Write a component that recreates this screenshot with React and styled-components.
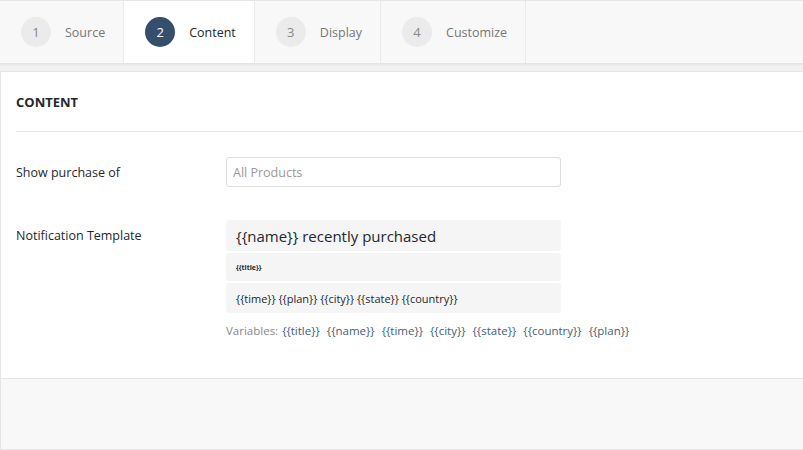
import React from "react";
import styled, { createGlobalStyle } from "styled-components";

const GlobalStyle = createGlobalStyle`
    html, body {
        margin: 0;
        padding: 0;
        background: #f1f1f1;
        font-family: "Open Sans", "Noto Sans", sans-serif;
    }
    * { box-sizing: border-box; }
`;

const steps = ["Source", "Content", "Display", "Customize"];
const variables = ["{{title}}", "{{name}}", "{{time}}", "{{city}}", "{{state}}", "{{country}}", "{{plan}}"];

const App = () => {
    return (
        <Page>
            <GlobalStyle />
            <TabBar>
                {steps.map((label, i) => (
                    <Tab key={label} active={i === 1}>
                        <StepNumber active={i === 1}>{i + 1}</StepNumber>
                        {label}
                    </Tab>
                ))}
            </TabBar>

            <Card>
                <CardHeader>CONTENT</CardHeader>
                <CardBody>
                    <FieldRow>
                        <Label>Show purchase of</Label>
                        <Input placeholder="All Products" />
                    </FieldRow>
                    <FieldRow top>
                        <Label top>Notification Template</Label>
                        <div>
                            <TemplateStack>
                                <TemplateLine size="big">{"{{name}} recently purchased"}</TemplateLine>
                                <TemplateLine size="tiny">{"{{title}}"}</TemplateLine>
                                <TemplateLine>{"{{time}} {{plan}} {{city}} {{state}} {{country}}"}</TemplateLine>
                            </TemplateStack>
                            <Variables>
                                Variables:
                                {variables.map((v) => (
                                    <Var key={v}>{v}</Var>
                                ))}
                            </Variables>
                        </div>
                    </FieldRow>
                </CardBody>
                <CardFooter />
            </Card>
        </Page>
    );
};

const Page = styled.div`
    width: 803px;
    height: 450px;
    overflow: hidden;
    background: #f1f1f1;
`;

const TabBar = styled.div`
    display: flex;
    height: 64px;
    background: #f8f8f8;
    border-top: 1px solid #e6e6e6;
    border-bottom: 1px solid #e4e4e4;
    box-shadow: 0 1px 2px rgba(0, 0, 0, 0.05);
    margin-bottom: 7px;
`;

const Tab = styled.div`
    display: flex;
    align-items: center;
    gap: 14px;
    padding: 0 18px 0 21px;
    height: 100%;
    border-right: 1px solid #eaeaea;
    background: ${(p) => (p.active ? "#ffffff" : "transparent")};
    color: ${(p) => (p.active ? "#23282d" : "#777")};
    font-size: 12.5px;
`;

const StepNumber = styled.span`
    width: 30px;
    height: 30px;
    border-radius: 50%;
    display: flex;
    align-items: center;
    justify-content: center;
    background: ${(p) => (p.active ? "#354e6b" : "#ebebeb")};
    color: ${(p) => (p.active ? "#ffffff" : "#888")};
    font-size: 13px;
`;

const Card = styled.div`
    background: #ffffff;
    border: 1px solid #e5e5e5;
    border-right: none;
`;

const CardHeader = styled.div`
    margin: 0 0 0 15px;
    height: 60px;
    display: flex;
    align-items: center;
    border-bottom: 1px solid #e8e8e8;
    font-size: 13px;
    font-weight: 700;
    color: #23282d;
`;

const CardBody = styled.div`
    padding: 25px 0 40px 15px;
    display: flex;
    flex-direction: column;
    gap: 33px;
`;

const FieldRow = styled.div`
    display: grid;
    grid-template-columns: 210px 335px;
    align-items: ${(p) => (p.top ? "start" : "center")};
`;

const Label = styled.div`
    font-size: 12.5px;
    color: #23282d;
    padding-top: ${(p) => (p.top ? "7px" : "0")};
`;

const Input = styled.input`
    height: 30px;
    width: 335px;
    border: 1px solid #dddddd;
    border-radius: 3px;
    padding: 0 6px;
    font-family: inherit;
    font-size: 12.5px;
    outline: none;

    &::placeholder {
        color: #999;
    }
`;

const TemplateStack = styled.div`
    display: flex;
    flex-direction: column;
    gap: 2px;
`;

const TemplateLine = styled.div`
    background: #f5f5f5;
    border-radius: 3px;
    padding: 0 10px;
    display: flex;
    align-items: center;
    color: #23282d;
    height: ${(p) => (p.size === "big" ? "31px" : p.size === "tiny" ? "28px" : "30px")};
    font-size: ${(p) => (p.size === "big" ? "15px" : p.size === "tiny" ? "7px" : "11px")};
    font-weight: ${(p) => (p.size === "tiny" ? 700 : 400)};
`;

const Variables = styled.div`
    margin-top: 10px;
    font-size: 11.5px;
    color: #888;
    white-space: nowrap;
`;

const Var = styled.span`
    color: #466079;
    margin-left: 4px;
    margin-right: 3px;
`;

const CardFooter = styled.div`
    height: 71px;
    background: #f8f8f8;
    border-top: 1px solid #e5e5e5;
`;

export default App;
